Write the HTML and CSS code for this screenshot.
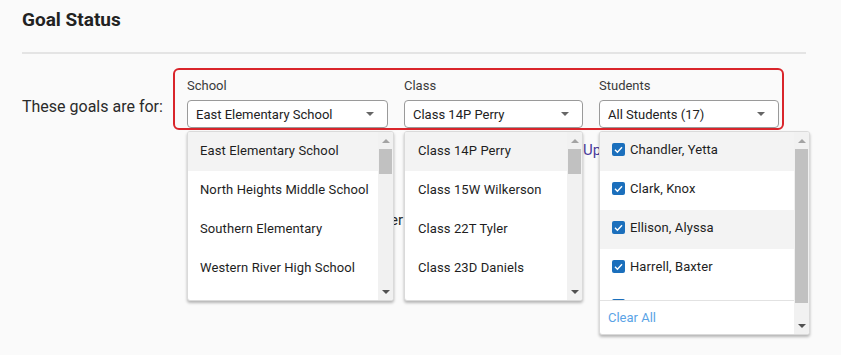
FILE: index.html
```html
<!DOCTYPE html>
<html lang="en">
<head>
<meta charset="UTF-8">
<title>Goal Status</title>
<link rel="stylesheet" href="styles.css">
</head>
<body>
<div class="page">
  <h2 class="title">Goal Status</h2>
  <div class="rule"></div>

  <div class="filter-row">
    <div class="filter-label">These goals are for:</div>
    <div class="filter-box">

      <div class="field field-school">
        <div class="field-label">School</div>
        <div class="select"><span>East Elementary School</span><span class="caret"></span></div>
        <div class="menu menu-school">
          <div class="menu-list">
            <div class="option active">East Elementary School</div>
            <div class="option">North Heights Middle School</div>
            <div class="option">Southern Elementary</div>
            <div class="option">Western River High School</div>
            <div class="option">Lakeside Academy</div>
          </div>
          <div class="scrollbar">
            <div class="sb-btn sb-up"></div>
            <div class="sb-track"><div class="sb-thumb thumb-short"></div></div>
            <div class="sb-btn sb-down"></div>
          </div>
        </div>
      </div>

      <div class="field field-class">
        <div class="field-label">Class</div>
        <div class="select"><span>Class 14P Perry</span><span class="caret"></span></div>
        <div class="menu menu-class">
          <div class="menu-list">
            <div class="option active">Class 14P Perry</div>
            <div class="option">Class 15W Wilkerson</div>
            <div class="option">Class 22T Tyler</div>
            <div class="option">Class 23D Daniels</div>
            <div class="option">Class 31B Brooks</div>
          </div>
          <div class="scrollbar">
            <div class="sb-btn sb-up"></div>
            <div class="sb-track"><div class="sb-thumb thumb-short"></div></div>
            <div class="sb-btn sb-down"></div>
          </div>
        </div>
      </div>

      <div class="field field-students">
        <div class="field-label">Students</div>
        <div class="select"><span>All Students (17)</span><span class="caret"></span></div>
        <div class="menu menu-students">
          <div class="menu-col">
            <div class="menu-list">
              <div class="option check-option shaded"><span class="checkbox"><svg viewBox="0 0 13 13" width="13" height="13"><polyline points="3,6.8 5.4,9.2 10,4.2" fill="none" stroke="#fff" stroke-width="1.4"/></svg></span>Chandler, Yetta</div>
              <div class="option check-option"><span class="checkbox"><svg viewBox="0 0 13 13" width="13" height="13"><polyline points="3,6.8 5.4,9.2 10,4.2" fill="none" stroke="#fff" stroke-width="1.4"/></svg></span>Clark, Knox</div>
              <div class="option check-option shaded"><span class="checkbox"><svg viewBox="0 0 13 13" width="13" height="13"><polyline points="3,6.8 5.4,9.2 10,4.2" fill="none" stroke="#fff" stroke-width="1.4"/></svg></span>Ellison, Alyssa</div>
              <div class="option check-option"><span class="checkbox"><svg viewBox="0 0 13 13" width="13" height="13"><polyline points="3,6.8 5.4,9.2 10,4.2" fill="none" stroke="#fff" stroke-width="1.4"/></svg></span>Harrell, Baxter</div>
              <div class="option check-option"><span class="checkbox"><svg viewBox="0 0 13 13" width="13" height="13"><polyline points="3,6.8 5.4,9.2 10,4.2" fill="none" stroke="#fff" stroke-width="1.4"/></svg></span>Jiles, Arthur</div>
            </div>
            <div class="menu-footer"><span class="clear-link">Clear All</span></div>
          </div>
          <div class="scrollbar">
            <div class="sb-btn sb-up"></div>
            <div class="sb-track"><div class="sb-thumb thumb-long"></div></div>
            <div class="sb-btn sb-down"></div>
          </div>
        </div>
      </div>

    </div>
  </div>

  <div class="goal-tabs"><span class="tab-link">Upcoming Goals</span></div>
  <div class="goal-note">Progress is tracked per learner</div>
</div>
</body>
</html>
```

FILE: styles.css
```css
body {
  margin: 0;
  background-color: #fafafa;
  color: #222222;
  font-family: Roboto, "Liberation Sans", Arial, sans-serif;
}

.page {
  box-sizing: border-box;
  min-height: 355px;
  padding: 8px 35px 0 22px;
}

.title {
  margin: 0;
  font-size: 19px;
  line-height: 23px;
  font-weight: 700;
  color: #222222;
}

.rule {
  margin-top: 21px;
  width: 784px;
  height: 2px;
  background-color: #e4e4e4;
}

/* filter row */
.filter-row {
  display: flex;
  margin-top: 14px;
}

.filter-label {
  width: 151px;
  padding-top: 29px;
  font-size: 16px;
  line-height: 20px;
  color: #2a2a2a;
}

.filter-box {
  display: flex;
  gap: 16px;
  padding: 8px 3px 0 12px;
  border: 2px solid #d9252b;
  border-radius: 6px;
}

.field {
  position: relative;
}

.field-school { width: 201px; }
.field-class { width: 179px; }
.field-students { width: 180px; }

.field-label {
  font-size: 13px;
  line-height: 16px;
  color: #3a3a3a;
  margin-bottom: 6px;
}

.select {
  box-sizing: border-box;
  height: 28px;
  display: flex;
  align-items: center;
  justify-content: space-between;
  padding: 0 13px 0 8px;
  background-color: #ffffff;
  border: 1px solid #9a9a9a;
  border-radius: 4px;
  font-size: 13px;
  color: #222222;
}

.caret {
  width: 0;
  height: 0;
  border-left: 4px solid transparent;
  border-right: 4px solid transparent;
  border-top: 4px solid #666666;
}

/* dropdown menus */
.menu {
  position: absolute;
  top: calc(100% + 3px);
  left: 0;
  z-index: 2;
  display: flex;
  box-sizing: border-box;
  background-color: #ffffff;
  border: 1px solid #dadada;
  border-radius: 3px;
  box-shadow: 0 2px 3px rgba(0, 0, 0, 0.28);
  overflow: hidden;
}

.menu-school { width: 207px; height: 170px; }
.menu-class { width: 179px; height: 170px; }
.menu-students { width: 211px; height: 204px; }

.menu-list {
  flex: 1;
  overflow: hidden;
}

.option {
  height: 39px;
  line-height: 37px;
  padding-left: 12px;
  font-size: 13px;
  letter-spacing: 0.1px;
  color: #1e1e1e;
  white-space: nowrap;
}

.menu-class .option {
  padding-left: 13px;
}

.option.active,
.option.shaded {
  background-color: #f3f3f3;
}

.menu-col {
  flex: 1;
  display: flex;
  flex-direction: column;
}

.menu-students .menu-list {
  flex: none;
  height: 168px;
}

.check-option {
  display: flex;
  align-items: center;
  padding-bottom: 4px;
  box-sizing: border-box;
}

.checkbox {
  display: block;
  width: 13px;
  height: 13px;
  margin-right: 5px;
  border-radius: 2px;
  background-color: #1b6fbc;
}

.checkbox svg {
  display: block;
}

.menu-footer {
  flex: 1;
  border-top: 1px solid #e2e2e2;
  padding-left: 8px;
  line-height: 33px;
  font-size: 13px;
}

.clear-link {
  color: #5aa3e6;
  cursor: pointer;
}

/* drawn scrollbar */
.scrollbar {
  width: 15px;
  display: flex;
  flex-direction: column;
  background-color: #f1f1f1;
}

.sb-btn {
  height: 17px;
  display: flex;
  align-items: center;
  justify-content: center;
}

.sb-btn::before {
  content: "";
  width: 0;
  height: 0;
  border-left: 4px solid transparent;
  border-right: 4px solid transparent;
}

.sb-up::before {
  border-bottom: 4px solid #a3a3a3;
}

.sb-down::before {
  border-top: 4px solid #505050;
}

.sb-track {
  flex: 1;
}

.sb-thumb {
  margin: 0 1px;
  background-color: #c1c1c1;
}

.thumb-short { height: 25px; }
.thumb-long { height: 154px; }

/* page content behind the menus */
.goal-tabs {
  margin-top: 10px;
  padding-left: 561px;
  font-size: 15px;
  line-height: 20px;
}

.tab-link {
  color: #4a3a9c;
}

.goal-note {
  margin-top: 50px;
  width: 381px;
  text-align: right;
  font-size: 15px;
  line-height: 20px;
  color: #2a2a2a;
}
```
